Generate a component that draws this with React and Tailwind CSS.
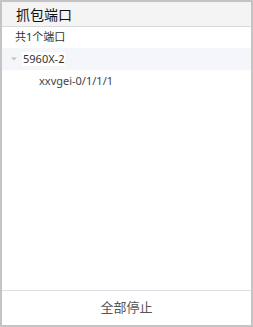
import React from 'react';

export default function App() {
  return (
    <div className="w-[253px] h-[327px] border-2 border-[#c4c4c4] bg-white flex flex-col font-['Noto_Sans','Noto_Sans_CJK_SC',sans-serif]">
      {/* Header */}
      <div className="h-[25px] shrink-0 bg-[#f4f4f4] border-b border-[#d9d9d9] flex items-center pl-[14px] text-[14px] text-[#111]">
        抓包端口
      </div>

      <div className="flex-1 flex flex-col">
        <div className="h-[21px] flex items-center pl-[13px] text-[11px] text-[#333]">共1个端口</div>

        {/* Tree node */}
        <div className="h-[22px] bg-[#f5f6fa] flex items-center pl-[8px]">
          <svg width="8" height="6" viewBox="0 0 8 6" className="mr-[4px]">
            <path d="M1 1.5 L7 1.5 L4 4.5 Z" fill="#c0c4cc" />
          </svg>
          <span className="bg-white px-[1px] text-[11px] text-[#333] leading-[14px]">5960X-2</span>
        </div>

        <div className="h-[22px] flex items-center pl-[37px] text-[11px] text-[#444]">xxvgei-0/1/1/1</div>
      </div>

      {/* Footer */}
      <div className="h-[35px] shrink-0 border-t border-[#dcdfe6] flex items-center justify-center text-[13px] text-[#555]">
        全部停止
      </div>
    </div>
  );
}
